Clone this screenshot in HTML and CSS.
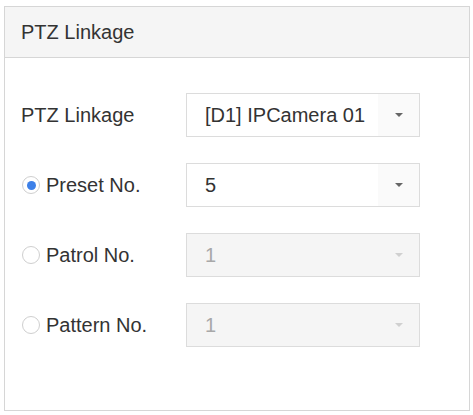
FILE: index.html
```html
<!DOCTYPE html>
<html lang="en">
<head>
    <meta charset="UTF-8">
    <meta name="viewport" content="width=device-width, initial-scale=1.0">
    <title>PTZ Linkage</title>
    <link rel="stylesheet" href="styles.css">
</head>
<body>
    <div class="panel">
        <div class="panel-title">PTZ Linkage</div>
        <div class="panel-body">
            <div class="form-row">
                <div class="form-label">PTZ Linkage</div>
                <div class="select">
                    <span class="select-value">[D1] IPCamera 01</span>
                    <span class="select-arrow"><i></i></span>
                </div>
            </div>
            <div class="form-row">
                <div class="form-label"><span class="radio checked"></span>Preset No.</div>
                <div class="select">
                    <span class="select-value">5</span>
                    <span class="select-arrow"><i></i></span>
                </div>
            </div>
            <div class="form-row">
                <div class="form-label"><span class="radio"></span>Patrol No.</div>
                <div class="select disabled">
                    <span class="select-value">1</span>
                    <span class="select-arrow"><i></i></span>
                </div>
            </div>
            <div class="form-row">
                <div class="form-label"><span class="radio"></span>Pattern No.</div>
                <div class="select disabled">
                    <span class="select-value">1</span>
                    <span class="select-arrow"><i></i></span>
                </div>
            </div>
        </div>
    </div>
</body>
</html>
```

FILE: styles.css
```css
body {
    margin: 0;
    background: #fff;
    font-family: 'Liberation Sans', Arial, sans-serif;
    font-size: 20px;
    color: #333;
}
.panel {
    margin: 6px 3px 4px 4px;
    border: 1px solid #d6d6d6;
    background: #fff;
}
.panel-title {
    height: 50px;
    line-height: 50px;
    padding-left: 16px;
    background-color: #f5f5f5;
    border-bottom: 1px solid #d6d6d6;
}
.panel-body {
    padding: 35px 0 63px 16px;
}
.form-row {
    display: flex;
    align-items: center;
    height: 44px;
    margin-bottom: 26px;
}
.form-row:last-child {
    margin-bottom: 0;
}
.form-label {
    width: 165px;
    display: flex;
    align-items: center;
}
.radio {
    width: 16px;
    height: 16px;
    border: 1px solid #cfcfcf;
    border-radius: 50%;
    margin: 0 6px 0 1px;
    display: flex;
    align-items: center;
    justify-content: center;
}
.radio.checked::after {
    content: "";
    width: 9px;
    height: 9px;
    border-radius: 50%;
    background: #3d80e8;
}
.select {
    width: 234px;
    height: 44px;
    box-sizing: border-box;
    border: 1px solid #dcdcdc;
    display: flex;
    background: #fff;
}
.select-value {
    flex: 1;
    padding-left: 18px;
    line-height: 42px;
}
.select-arrow {
    width: 41px;
    background: #fafafa;
    display: flex;
    align-items: center;
    justify-content: center;
}
.select-arrow i {
    width: 0;
    height: 0;
    border-left: 4px solid transparent;
    border-right: 4px solid transparent;
    border-top: 4px solid #666;
}
.select.disabled {
    background: #f5f5f5;
    color: #a8a8a8;
}
.select.disabled .select-arrow {
    background: #f5f5f5;
}
.select.disabled .select-arrow i {
    border-top-color: #d0d0d0;
}
```
